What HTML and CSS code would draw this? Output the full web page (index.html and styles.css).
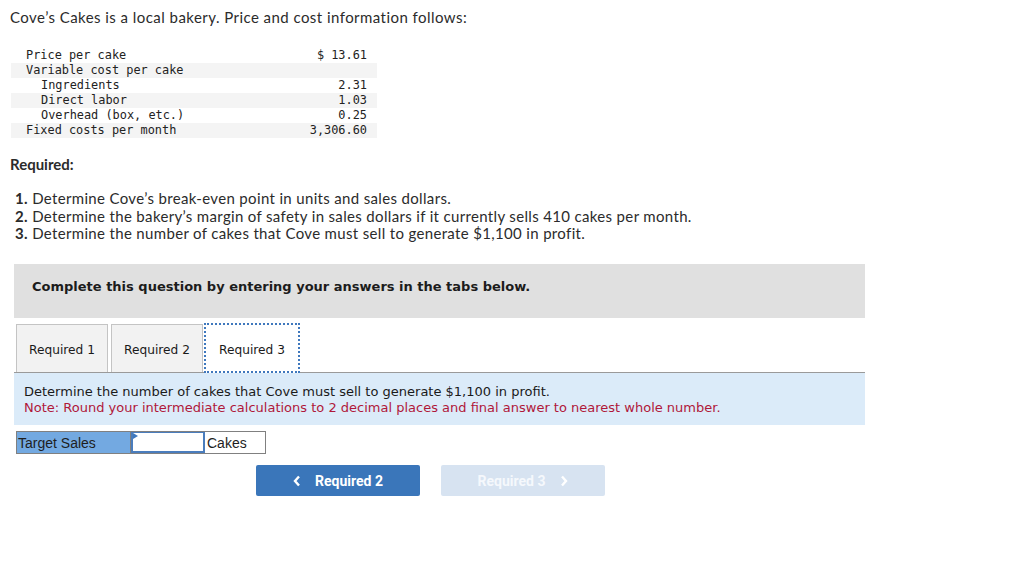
FILE: index.html
```html
<!DOCTYPE html>
<html lang="en">
<head>
<meta charset="utf-8">
<title>Cove's Cakes</title>
<link rel="stylesheet" href="styles.css">
</head>
<body>
<div class="page">
  <p class="intro">Cove’s Cakes is a local bakery. Price and cost information follows:</p>
  <table class="data">
    <tr><td class="lbl">Price per cake</td><td class="val">$ 13.61</td></tr>
    <tr class="alt"><td class="lbl">Variable cost per cake</td><td class="val"></td></tr>
    <tr><td class="lbl sub">Ingredients</td><td class="val">2.31</td></tr>
    <tr class="alt"><td class="lbl sub">Direct labor</td><td class="val">1.03</td></tr>
    <tr><td class="lbl sub">Overhead (box, etc.)</td><td class="val">0.25</td></tr>
    <tr class="alt"><td class="lbl">Fixed costs per month</td><td class="val">3,306.60</td></tr>
  </table>
  <p class="req-title">Required:</p>
  <ol class="req-list">
    <li><b>1.</b> Determine Cove’s break-even point in units and sales dollars.</li>
    <li><b>2.</b> Determine the bakery’s margin of safety in sales dollars if it currently sells 410 cakes per month.</li>
    <li><b>3.</b> Determine the number of cakes that Cove must sell to generate $1,100 in profit.</li>
  </ol>
  <div class="instructions">Complete this question by entering your answers in the tabs below.</div>
  <div class="tabs">
    <div class="tab">Required 1</div>
    <div class="tab">Required 2</div>
    <div class="tab active">Required 3</div>
  </div>
  <div class="panel">
    <div>Determine the number of cakes that Cove must sell to generate $1,100 in profit.</div>
    <div class="note">Note: Round your intermediate calculations to 2 decimal places and final answer to nearest whole number.</div>
  </div>
  <div class="answer">
    <div class="a-label">Target Sales</div>
    <div class="a-input"><span class="flag"></span></div>
    <div class="a-unit">Cakes</div>
  </div>
  <div class="nav">
    <div class="btn prev">
      <svg class="chev" width="8" height="12" viewBox="0 0 8 12"><path d="M6 1.5 L2 6 L6 10.5" fill="none" stroke="#fff" stroke-width="2.4"/></svg>
      <span>Required 2</span>
    </div>
    <div class="btn next disabled">
      <span>Required 3</span>
      <svg class="chev" width="8" height="12" viewBox="0 0 8 12"><path d="M2 1.5 L6 6 L2 10.5" fill="none" stroke="#fff" stroke-width="2.4"/></svg>
    </div>
  </div>
</div>
</body>
</html>
```
FILE: styles.css
```css
* { box-sizing: border-box; }
body {
  margin: 0;
  background: #fff;
  color: #2b2b2b;
  font-family: "Lato", "Open Sans", sans-serif;
}
.page {
  padding: 8px 10px 0 10px;
}
.intro {
  margin: 0;
  font-size: 15px;
  line-height: 18px;
  letter-spacing: 0.45px;
}
.data {
  margin: 22px 0 0 1px;
  width: 366px;
  border-collapse: collapse;
  font-family: "DejaVu Sans Mono", "Liberation Mono", monospace;
  font-size: 11.9px;
  color: #222;
}
.data td {
  height: 15px;
  line-height: 15px;
  padding: 0;
  white-space: pre;
}
.data tr.alt { background: #f4f4f4; }
.data .lbl { padding-left: 15px; }
.data .lbl.sub { padding-left: 30px; }
.data .val { text-align: right; padding-right: 10px; }
.req-title {
  margin: 17px 0 0 0;
  font-size: 15px;
  line-height: 18px;
  font-weight: 700;
}
.req-list {
  list-style: none;
  margin: 17px 0 0 0;
  padding: 0 0 0 5px;
  font-size: 15px;
  line-height: 17.5px;
  letter-spacing: 0.34px;
}
.req-list b { font-weight: 700; }
.instructions {
  margin: 21px 0 0 4px;
  width: 851px;
  height: 54px;
  background: #e0e0e0;
  padding: 0 0 9px 18px;
  display: flex;
  align-items: center;
  font-family: "DejaVu Sans", Verdana, sans-serif;
  font-weight: 700;
  font-size: 13px;
  color: #1c1c1c;
}
.tabs {
  margin: 6px 0 0 4px;
  width: 851px;
  height: 49px;
  padding: 0 0 0 2px;
  display: flex;
  align-items: flex-end;
  border-bottom: 1px solid #9a9a9a;
  gap: 3px;
}
.tab {
  width: 92px;
  height: 48px;
  padding-top: 3px;
  background: #f2f2f2;
  border: 1px solid #c4c4c4;
  border-bottom: none;
  display: flex;
  align-items: center;
  justify-content: center;
  font-family: "DejaVu Sans", Verdana, sans-serif;
  font-size: 12.2px;
  color: #1a1a1a;
}
.tab.active {
  width: 96px;
  margin-left: -2px;
  height: 50px;
  margin-bottom: -1px;
  padding-top: 4px;
  background: #fff;
  border: 2px dotted #3f78bd;
}
.panel {
  margin-left: 4px;
  width: 851px;
  background: #dbebf9;
  padding: 11px 10px 9px 10px;
  font-family: "DejaVu Sans", Verdana, sans-serif;
  font-size: 13px;
  line-height: 16px;
  color: #1a1a1a;
}
.panel .note { color: #b0183a; }
.answer {
  margin: 6px 0 0 6px;
  width: 250px;
  height: 23px;
  display: flex;
  border: 1px solid #808080;
  font-family: "Liberation Sans", Arial, sans-serif;
  font-size: 14px;
  color: #1e1e1e;
}
.a-label {
  width: 114px;
  background: #73a9e1;
  border-right: 1px solid #808080;
  padding: 1px 0 0 1px;
  display: flex;
  align-items: center;
}
.a-input {
  position: relative;
  width: 74px;
  background: #fff;
  border: 2px solid #4a7dbd;
  border-top-width: 1px;
}
.flag {
  position: absolute;
  left: 0;
  top: 0;
  width: 0;
  height: 0;
  border-top: 3px solid transparent;
  border-bottom: 3px solid transparent;
  border-left: 5px solid #3f78bd;
}
.a-unit {
  flex: 1;
  padding: 1px 0 0 2px;
  display: flex;
  align-items: center;
}
.nav {
  margin: 11px 0 0 246px;
  display: flex;
  gap: 21px;
}
.btn {
  width: 164px;
  height: 31px;
  padding-top: 1px;
  border-radius: 2px;
  display: flex;
  align-items: center;
  justify-content: center;
  gap: 14px;
  font-family: "Roboto", "Liberation Sans", sans-serif;
  font-weight: 700;
  font-size: 14px;
  color: #fff;
}
.btn.prev { background: #3a76ba; }
.btn.next { background: #d7e3f1; color: #f5f8fc; gap: 15px; }
.btn .chev { display: block; }
```
